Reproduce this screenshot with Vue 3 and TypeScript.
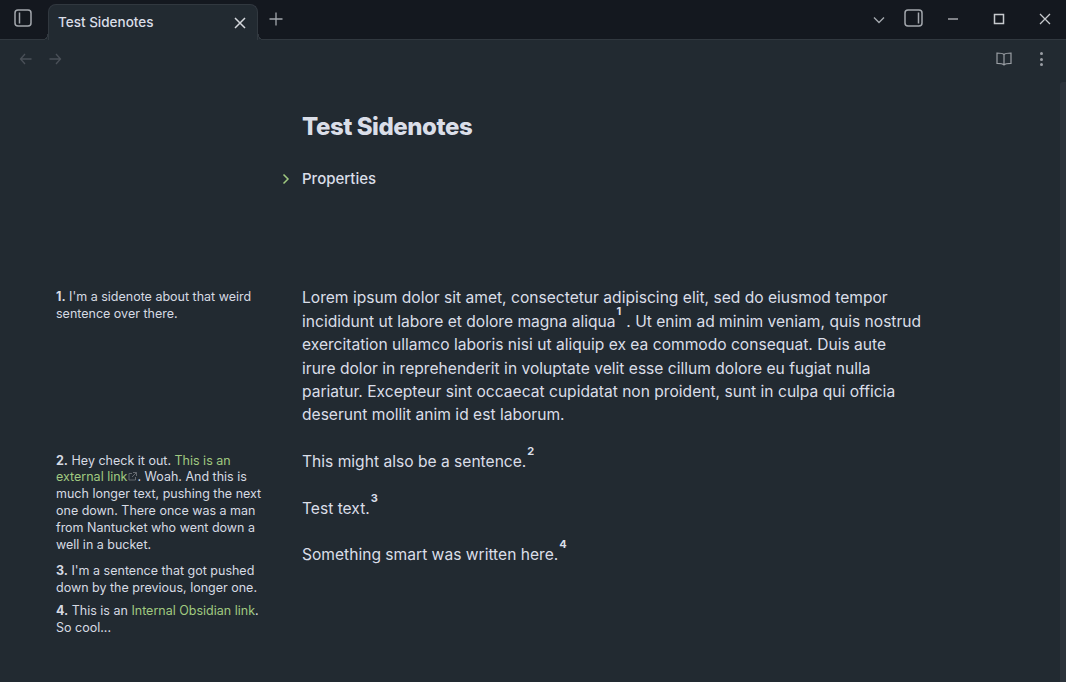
<script setup lang="ts">
const paragraphs = ["This might also be a sentence.", "Test text.", "Something smart was written here."];
</script>

<template>
	<div class="window">
		<header class="titlebar">
			<button class="sidebar-btn">
				<svg width="18" height="18" viewBox="0 0 18 18" fill="none" stroke="currentColor" stroke-width="1.5">
					<rect x="1" y="1" width="16" height="16" rx="3" />
					<path d="M5.5 3.5v11" />
				</svg>
			</button>
			<div class="tab">
				<span class="tab-title">Test Sidenotes</span>
				<svg class="tab-close" width="12" height="12" viewBox="0 0 12 12" fill="none" stroke="currentColor" stroke-width="1.5">
					<path d="M1 1l10 10M11 1L1 11" />
				</svg>
			</div>
			<svg class="tab-new" width="14" height="14" viewBox="0 0 14 14" fill="none" stroke="currentColor" stroke-width="1.3">
				<path d="M7 0.5v13M0.5 7h13" />
			</svg>
			<div class="spacer"></div>
			<svg class="tab-list" width="12" height="8" viewBox="0 0 12 8" fill="none" stroke="currentColor" stroke-width="1.4">
				<path d="M1 1.5l5 5 5-5" />
			</svg>
			<svg class="right-panel" width="19" height="18" viewBox="0 0 19 18" fill="none" stroke="currentColor" stroke-width="1.5">
				<rect x="1" y="1" width="17" height="16" rx="3" />
				<path d="M14.500 3.500v11" />
			</svg>
			<div class="win-btn">
				<svg width="12" height="12" viewBox="0 0 12 12" fill="none" stroke="currentColor" stroke-width="1.2"><path d="M1 6h10" /></svg>
			</div>
			<div class="win-btn">
				<svg width="12" height="12" viewBox="0 0 12 12" fill="none" stroke="currentColor" stroke-width="1.5"><rect x="1.5" y="1.5" width="9" height="9" /></svg>
			</div>
			<div class="win-btn win-close">
				<svg width="12" height="12" viewBox="0 0 12 12" fill="none" stroke="currentColor" stroke-width="1.3"><path d="M1 1l10 10M11 1L1 11" /></svg>
			</div>
		</header>

		<nav class="navbar">
			<svg width="16" height="16" viewBox="0 0 16 16" fill="none" stroke="currentColor" stroke-width="1.3" class="nav-arrow">
				<path d="M13.5 8h-11M7 3L2.5 8 7 13" />
			</svg>
			<svg width="16" height="16" viewBox="0 0 16 16" fill="none" stroke="currentColor" stroke-width="1.3" class="nav-arrow">
				<path d="M2.5 8h11M9 3l4.5 5L9 13" />
			</svg>
			<div class="spacer"></div>
			<svg class="book" width="16" height="16" viewBox="0 0 16 16" fill="none" stroke="currentColor" stroke-width="1.2">
				<path d="M8 3.500C6.800 2.300 5 2 1 2V12.300c4 0 5.800.3 7 1.500 1.200-1.200 3-1.500 7-1.500V2c-4 0-5.800.3-7 1.500zM8 3.500v11" />
			</svg>
			<div class="dots"><i></i><i></i><i></i></div>
		</nav>

		<main class="page">
			<aside class="notes">
				<div class="note note-1"><b>1.</b> I'm a sidenote about that weird sentence over there.</div>
				<div class="note note-2">
					<b>2.</b> Hey check it out. <a>This is an external link</a><svg class="ext" width="9" height="9" viewBox="0 0 9 9" fill="none" stroke="currentColor" stroke-width="0.9"><path d="M4 1.500H1v6.500h6.500V5M5 .5h3.500V4M8.500 .5L4 5" /></svg>. Woah. And this is much longer text, pushing the next one down. There once was a man from Nantucket who went down a well in a bucket.
				</div>
				<div class="note note-3"><b>3.</b> I'm a sentence that got pushed down by the previous, longer one.</div>
				<div class="note"><b>4.</b> This is an <a>Internal Obsidian link</a>. So cool...</div>
			</aside>
			<section class="content">
				<h1>Test Sidenotes</h1>
				<div class="properties">
					<svg class="chevron" width="8" height="12" viewBox="0 0 8 12" fill="none" stroke="currentColor" stroke-width="1.5">
						<path d="M1.500 1.500L6 6l-4.500 4.500" />
					</svg>
					<span>Properties</span>
				</div>
				<p class="first">
					Lorem ipsum dolor sit amet, consectetur adipiscing elit, sed do eiusmod tempor incididunt ut labore et dolore magna aliqua<sup class="wide">1</sup>. Ut enim ad minim veniam, quis nostrud exercitation ullamco laboris nisi ut aliquip ex ea commodo consequat. Duis aute irure dolor in reprehenderit in voluptate velit esse cillum dolore eu fugiat nulla pariatur. Excepteur sint occaecat cupidatat non proident, sunt in culpa qui officia deserunt mollit anim id est laborum.
				</p>
				<p v-for="(text, i) in paragraphs" :key="i">{{ text }}<sup>{{ i + 2 }}</sup></p>
			</section>
			<div class="scrollbar"></div>
		</main>
	</div>
</template>

<style scoped>
	.window {
		display: flex;
		flex-direction: column;
		width: 1066px;
		height: 682px;
		overflow: hidden;
		background-color: #222a31;
		color: #dadee8;
		font-family: Inter, "Noto Sans", sans-serif;
	}

	.titlebar {
		display: flex;
		align-items: center;
		height: 40px;
		flex: none;
		box-sizing: border-box;
		background-color: #14181f;
		border-bottom: 1px solid #31383f;
		color: #a3a7ad;
	}

	.sidebar-btn {
		display: flex;
		padding: 0;
		margin: -4px 16px 0 14px;
		border: none;
		background: none;
		color: #a3a7ad;
	}

	.tab {
		position: relative;
		display: flex;
		align-items: center;
		justify-content: space-between;
		width: 210px;
		height: 36px;
		margin-top: 4px;
		margin-bottom: -1px;
		box-sizing: border-box;
		padding: 0 11px 0 9px;
		background-color: #222a31;
		border: 1px solid #31383f;
		border-bottom: none;
		border-radius: 8px 8px 0 0;
	}

	/* little flares at the tab's feet */
	.tab::before,
	.tab::after {
		content: "";
		position: absolute;
		bottom: 0;
		width: 6px;
		height: 6px;
	}

	.tab::before {
		left: -7px;
		background: radial-gradient(circle at 0 0, #14181f 5.500px, #31383f 5.500px, #31383f 6.500px, #222a31 6.500px);
	}

	.tab::after {
		right: -7px;
		background: radial-gradient(circle at 100% 0, #14181f 5.500px, #31383f 5.500px, #31383f 6.500px, #222a31 6.500px);
	}

	.tab-title {
		font-size: 13.500px;
		font-weight: 500;
		margin-top: -1px;
		color: #dadee8;
	}

	.tab-close {
		color: #d5d8dd;
	}

	.tab-new {
		margin: -1px 0 0 11px;
	}

	.spacer {
		flex: 1;
	}

	.tab-list {
		margin: 0 19px 0 0;
	}

	.right-panel {
		margin: -3px 7px 0 0;
	}

	.win-btn {
		display: flex;
		align-items: center;
		justify-content: center;
		width: 46px;
		height: 36px;
		margin-top: -2px;
		color: #c6c9cd;
	}

	.win-close {
		box-sizing: border-box;
		width: 44px;
		padding-left: 2px;
	}

	.navbar {
		display: flex;
		align-items: center;
		flex: none;
		height: 38px;
		padding: 0 23px 0 18px;
		color: #9a9ea4;
	}

	.nav-arrow {
		margin-right: 13px;
		color: #4a5058;
	}

	.book {
		margin-right: 28px;
	}

	.dots {
		display: flex;
		flex-direction: column;
		gap: 2.500px;
		width: 3px;
	}

	.dots i {
		display: block;
		width: 3px;
		height: 3px;
		border-radius: 50%;
		background-color: #9a9ea4;
	}

	.page {
		position: relative;
		display: flex;
		flex: 1;
	}

	.notes {
		width: 206px;
		margin-left: 56px;
		padding-top: 211px;
		font-size: 12.500px;
		line-height: 16.800px;
		color: #d6dae3;
	}

	.note {
		margin-bottom: 8px;
	}

	.note-1 {
		margin-bottom: 130px;
	}

	.note-2 {
		margin-bottom: 9.500px;
	}

	.note-3 {
		margin-bottom: 7px;
	}

	.note b {
		font-weight: 700;
	}

	.note a {
		color: #a0c980;
	}

	.ext {
		margin-left: 1px;
		color: #6c7076;
		vertical-align: 0;
	}

	.content {
		width: 621px;
		margin-left: 40px;
		font-size: 15.600px;
		line-height: 23.400px;
	}

	h1 {
		margin: 33px 0 0;
		font-size: 24px;
		font-weight: 800;
		line-height: 32px;
		letter-spacing: -0.45px;
	}

	.properties {
		position: relative;
		margin-top: 25px;
		font-size: 15px;
		font-weight: 500;
		line-height: 22px;
	}

	.chevron {
		position: absolute;
		left: -20px;
		top: 5px;
		color: #a0c980;
	}

	p {
		margin: 0 0 23.200px;
	}

	.first {
		margin-top: 96.300px;
	}

	sup {
		font-size: 11px;
		font-weight: 700;
		line-height: 0;
		margin-left: 1px;
		vertical-align: 12px;
	}

	sup.wide {
		margin-right: 5px;
	}

	.scrollbar {
		position: absolute;
		top: 4px;
		right: 0;
		bottom: 0;
		width: 6px;
		background-color: #2c333b;
		border-radius: 3px 0 0 0;
	}
</style>
